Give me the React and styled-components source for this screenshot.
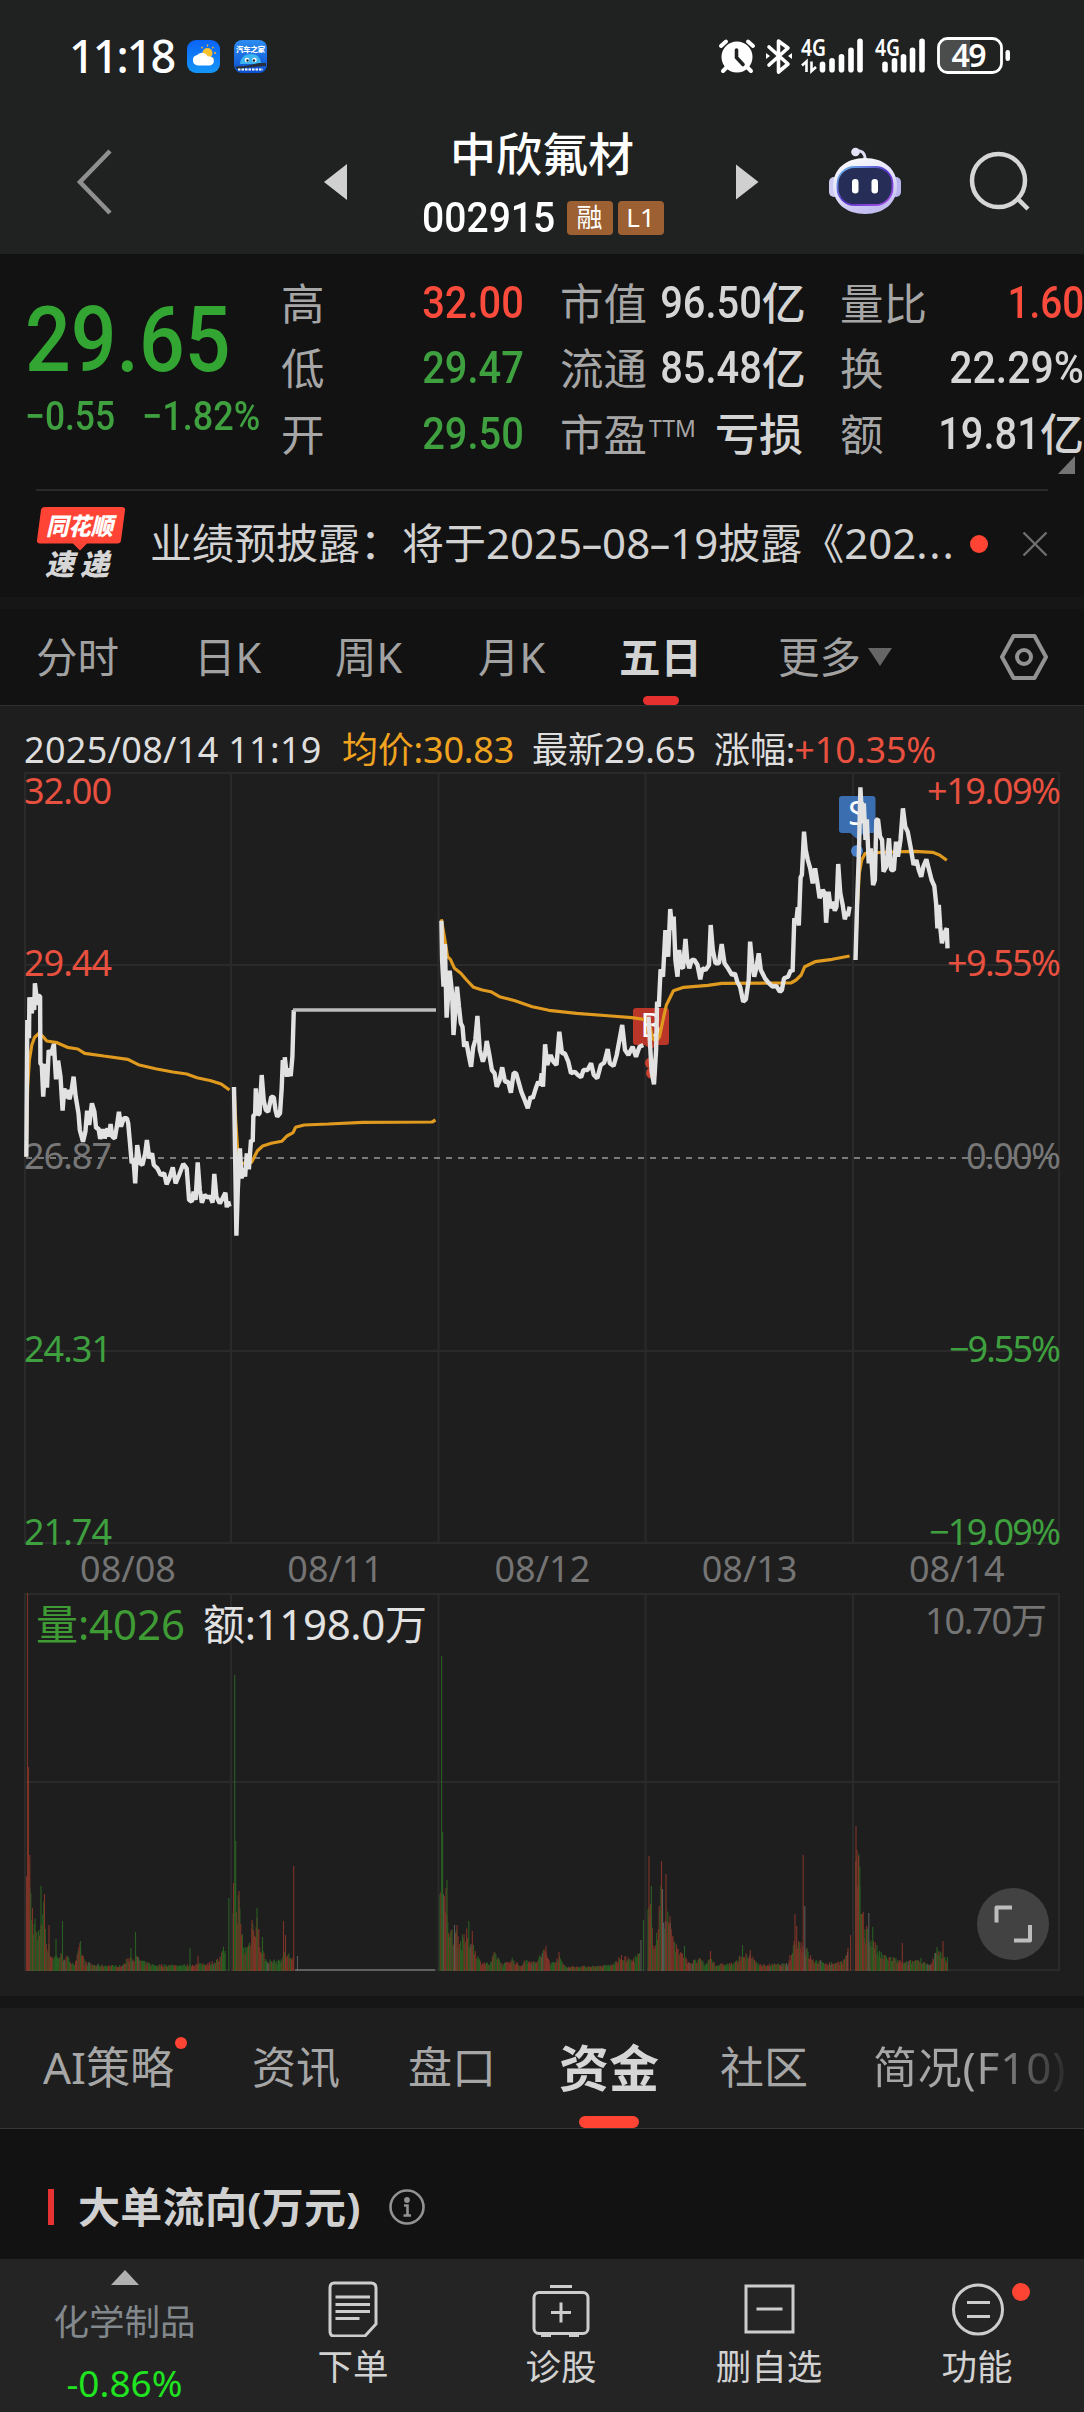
import React from "react";
import styled, { createGlobalStyle } from "styled-components";

const RED = "#e8503f";
const GREEN = "#3fa03f";

const GlobalStyle = createGlobalStyle`
  * {
    box-sizing: border-box;
  }
  body {
    margin: 0;
    background: #121212;
    color: #d4d4d4;
    font-family: "Noto Sans", "Noto Sans CJK SC", sans-serif;
  }
  svg {
    display: block;
    flex: none;
  }
`;

/* ---------- chart data ---------- */

// every point is in plot units, x0 moves a run to the right
const PX = 1568 / 542;
const toPath = ({ x0, pts }) =>
  pts
    .split(" ")
    .map((p) => {
      const [x, y] = p.split(",").map(Number);
      return `${(x0 + x / PX).toFixed(1)},${(760 + y / 3).toFixed(1)}`;
    })
    .join(" ");

const priceRuns = [
  { x0: 0, pts: "76,1190 79,780 84,835 85,712 92,760 96,712 99,750 101,670 106,712 108,735 112,708 116,708 117,910 121,915 125,1010 131,912 136,983 141,870 147,885 156,852 162,958 168,902 175,950 181,1052 186,985 190,1015 196,990 201,1018 207,990 213,950 219,1010 227,1060 231,1110 240,1145 247,1115 252,1052 258,1095 266,1030 273,1055 278,1105 285,1105 290,1137 297,1108 303,1135 311,1105 315,1130 320,1092 325,1130 332,1135 338,1100 344,1055 350,1100 358,1075 367,1075 371,1090 376,1150 381,1210 386,1195 391,1270 397,1155 405,1210 412,1215 420,1180 425,1140 432,1195 440,1180 445,1215 455,1225 465,1245 475,1240 482,1273 490,1255 500,1222 508,1270 518,1245 530,1212 540,1225 547,1320 555,1325 560,1295 566,1320 572,1207 578,1290 584,1328 592,1305 600,1312 608,1310 615,1328 620,1242 626,1310 636,1330 644,1315 652,1298 656,1342 660,1325 664,1340" },
  { x0: 0, pts: "677,981 684,1427 688,1290 694,1165 699,1255 705,1225 709,1250 714,1180 720,1228 726,1140 731,1145 733,1065 738,1065 740,985 746,1065 751,1060 757,945 763,1020 769,1050 776,1055 785,1010 792,1012 797,1050 802,1070 810,1060 815,985 818,900 822,945 824,892 830,950 834,925 841,948 846,890 850,750" },
  { x0: 0, pts: "1277,482 1279,600 1283,680 1287,552 1292,773 1297,700 1301,632 1308,700 1312,825 1317,760 1322,680 1328,740 1333,790 1338,800 1343,860 1349,845 1356,885 1363,920 1369,862 1375,840 1381,768 1388,870 1397,905 1403,885 1408,843 1415,880 1423,930 1431,940 1437,980 1445,962 1453,922 1461,965 1470,965 1478,998 1486,938 1493,940 1500,965 1508,995 1516,1015 1527,1045 1535,1010 1541,1015 1550,985 1557,965 1563,975 1567,940 1571,980 1577,853 1583,915 1593,885 1601,905 1610,915 1618,815 1626,880 1634,880 1644,905 1652,940 1663,935 1672,945 1681,952 1688,930 1700,930 1710,910 1718,945 1728,955 1738,915 1748,908 1758,867 1764,910 1775,918 1784,885 1800,795 1808,870 1818,885 1830,860 1840,890 1850,860 1861,855" },
  { x0: 542, pts: "308,770 312,840 317,935 324,973 330,870 333,725 338,740 343,628 350,650 357,510 365,590 371,447 377,510 381,470 386,600 392,650 397,570 402,620 408,625 415,537 420,600 426,625 433,600 441,600 450,615 458,658 464,625 473,630 483,615 488,495 494,570 502,610 512,610 520,552 528,610 538,625 550,645 558,640 565,665 573,680 582,725 590,718 598,660 602,545 608,610 614,650 620,625 627,580 633,630 645,655 655,668 667,680 678,678 688,695 694,690 700,655 712,650 720,630 725,635 730,475 735,490 740,442 743,497 748,352 752,345 758,215 763,270 769,300 776,325 783,370 790,325 797,370 803,415 812,390 818,400 822,488 829,395 835,445 841,425 847,452 852,440 857,312 863,400 870,435 876,478 882,455 885,468 890,440" },
  { x0: 542, pts: "907,600 912,420 917,270 921,82 926,180 931,130 936,240 940,178 945,310 951,265 958,375 963,360 967,180 972,178 978,230 984,240 988,335 996,320 1004,235 1010,330 1018,330 1024,245 1030,290 1037,240 1044,145 1051,200 1058,215 1066,260 1075,315 1083,300 1090,330 1097,350 1103,320 1112,298 1120,330 1127,360 1135,378 1140,430 1144,505 1148,435 1152,500 1157,550 1164,520 1171,505 1173,565" },
];

const averageRuns = [
  { x0: 0, pts: "76,1190 80,980 85,900 92,855 100,832 113,820 125,830 135,843 165,848 195,862 225,867 245,880 300,888 370,898 400,914 450,926 500,936 540,942 570,953 610,962 640,972 664,990" },
  { x0: 0, pts: "677,981 682,1080 690,1207 705,1210 728,1207 745,1172 760,1158 785,1150 815,1144 830,1128 848,1118 855,1102 880,1095 950,1092 1050,1087 1250,1086 1260,1080" },
  { x0: 0, pts: "1277,478 1287,540 1295,590 1303,598 1315,625 1333,640 1350,660 1370,682 1395,690 1420,695 1445,710 1490,722 1540,740 1588,751 1668,760 1768,768 1828,773 1863,778" },
  { x0: 542, pts: "308,778 320,835 330,845 340,830 350,780 360,735 380,692 410,682 480,676 520,670 720,669 735,660 750,645 760,620 790,605 840,598 890,588" },
  { x0: 542, pts: "907,598 912,450 918,340 925,300 935,280 1000,276 1080,274 1130,277 1150,285 1171,301" },
];

// [x, height] outline of the ordinary bars of each day
const volumeShapes = [
  [[26.5, 88], [29, 110], [32, 68], [35, 52], [38, 32], [41, 62], [44, 66], [47, 30], [52, 14], [60, 16], [66, 14], [75, 6], [80, 25], [85, 8], [95, 5], [122, 4], [130, 14], [136, 14], [144, 8], [155, 5], [188, 5], [200, 6], [213, 8], [220, 12], [226, 28]],
  [[233, 88], [237, 84], [240, 60], [244, 22], [249, 28], [253, 52], [257, 58], [260, 28], [266, 10], [279, 9], [286, 18], [292, 14], [294, 14]],
  [[440, 88], [444, 82], [447, 80], [450, 38], [455, 45], [461, 30], [467, 38], [473, 26], [480, 9], [490, 6], [495, 18], [503, 5], [512, 12], [520, 4], [528, 12], [535, 7], [545, 22], [551, 6], [558, 14], [566, 3], [600, 4], [612, 5], [622, 14], [632, 10], [640, 18]],
  [[648, 60], [651, 62], [654, 34], [657, 40], [661, 78], [665, 62], [671, 50], [676, 26], [683, 14], [690, 8], [701, 11], [705, 5], [711, 13], [716, 5], [735, 7], [742, 16], [752, 14], [760, 5], [788, 6], [795, 32], [801, 30], [806, 22], [813, 10], [830, 7], [843, 9], [848, 18]],
  [[855.5, 100], [858, 118], [861, 78], [865, 48], [870, 34], [876, 24], [882, 15], [893, 12], [904, 7], [920, 12], [930, 4], [936, 18], [941, 18], [947, 10]],
];

const R = "#a03a2b";
const G = "#2c7324";
const W = "#6e6e6e";
const volumeSpikes = [
  [27.5, 378, R], [28.5, 204, R], [29.8, 116, R], [41, 85, G], [44.5, 77, R], [49, 46, R], [56, 32, G], [62.5, 50, G], [80.5, 30, G],
  [131, 23, G], [135.5, 39, G], [190, 23, G], [198, 15, R], [228.8, 73, G],
  [233.5, 88, R], [234.7, 296, G], [235.7, 130, G], [239, 80, R], [252, 51, R], [257, 63, G], [262.5, 34, G], [283.5, 50, R], [285.5, 36, R], [293.7, 105, R], [297.5, 15, W],
  [441.6, 315, G], [442.6, 139, G], [447, 91, G], [454.5, 46, W], [457, 46, R], [468.8, 50, G], [472.3, 40, R], [546, 25, R], [559, 19, R], [643.5, 51, G], [641, 31, W],
  [649, 115, R], [651.4, 85, G], [661.5, 110, R], [662.5, 82, W], [666, 97, R], [670, 55, R], [684.5, 25, G], [710.5, 20, R], [742.5, 26, G], [750.3, 21, R], [795, 57, R], [796.7, 45, R], [803.2, 116, R], [804.8, 65, W], [848, 23, R], [850.6, 36, R],
  [856, 145, R], [857, 121, R], [858.5, 115, R], [859.8, 104, G], [868.8, 58, W], [872.7, 44, G], [902.3, 28, R], [937, 24, G], [943, 30, R], [947.5, 14, G],
];

function volumeBars() {
  let seed = 7;
  const rand = () => {
    seed = (seed * 16807) % 2147483647;
    return seed / 2147483647;
  };
  const bars = [];
  volumeShapes.forEach((shape) => {
    let i = 0;
    for (let x = shape[0][0]; x < shape[shape.length - 1][0]; x += 0.86) {
      while (x > shape[i + 1][0]) i++;
      const [x1, h1] = shape[i];
      const [x2, h2] = shape[i + 1];
      const h = h1 + ((h2 - h1) * (x - x1)) / (x2 - x1);
      const pick = rand();
      bars.push([x, h * (0.55 + rand() * 0.55) + 1.5, pick < 0.5 ? R : pick < 0.96 ? G : W]);
    }
  });
  return bars;
}

const bars = volumeBars().concat(volumeSpikes);

const dayLines = [231, 438.5, 645.5, 853];
const axis = [
  { y: 804, price: "32.00", pct: "+19.09%", width: 134, fill: RED },
  { y: 976, price: "29.44", pct: "+9.55%", width: 114, fill: RED },
  { y: 1169, price: "26.87", pct: "0.00%", width: 95, fill: "#777" },
  { y: 1362, price: "24.31", pct: "−9.55%", width: 112, fill: GREEN },
  { y: 1545, price: "21.74", pct: "−19.09%", width: 132, fill: GREEN },
];
const days = ["08/08", "08/11", "08/12", "08/13", "08/14"];

/* ---------- styles ---------- */

const Page = styled.div`
  width: 1084px;
  height: 2412px;
  display: flex;
  flex-direction: column;
  overflow: hidden;
  background: #121212;
`;

const TopArea = styled.header`
  height: 254px;
  background: #202221;
`;

const StatusBar = styled.div`
  height: 112px;
  padding: 0 69px 0 69px;
  display: flex;
  align-items: center;
`;

const Clock = styled.span`
  width: 118px;
  font-size: 45px;
  font-weight: 500;
  line-height: 60px;
  letter-spacing: -2px;
  color: #fff;
`;

const AppIcons = styled.div`
  display: flex;
  flex: 1;
  gap: 14px;
`;

const TitleBar = styled.div`
  height: 142px;
  padding: 0 52px 0 74px;
  display: flex;
  align-items: flex-start;
  svg {
    margin-top: 34px;
  }
`;

const TitleBox = styled.div`
  width: 390px;
  display: flex;
  flex-direction: column;
  align-items: center;
`;

const StockName = styled.div`
  margin-top: 13px;
  font-size: 46px;
  font-weight: 500;
  line-height: 56px;
  color: #fff;
`;

const CodeRow = styled.div`
  display: flex;
  align-items: center;
  gap: 5px;
  height: 46px;
  margin-top: 14px;
  padding-right: 8px;
`;

const Din = styled.span`
  display: inline-block;
  font-family: Roboto, "Noto Sans CJK SC", sans-serif;
  font-size: ${(p) => p.$size || 45}px;
  font-weight: 500;
  line-height: 1.2;
  color: ${(p) => p.$color || "#d6d6d6"};
  transform: scaleX(${(p) => p.$scale || 0.885});
  transform-origin: ${(p) => p.$origin || "right"} center;
`;

const Code = styled(Din)`
  margin-right: 6px;
`;

const Badge = styled.span`
  width: 46px;
  height: 34px;
  border-radius: 4px;
  background: #9c6032;
  color: #fff;
  font-size: 26px;
  line-height: 33px;
  text-align: center;
`;

const Quote = styled.section`
  position: relative;
  height: 235px;
  display: flex;
`;

const PriceBlock = styled.div`
  width: 281px;
  padding: 32px 0 0 25px;
  white-space: nowrap;
`;

const Changes = styled.div`
  display: flex;
  margin-top: -2px;
  gap: 15px;
`;

const Stats = styled.div`
  width: ${(p) => p.$width}px;
  margin-right: ${(p) => p.$gap || 0}px;
  padding-top: 16px;
`;

const StatRow = styled.div`
  height: 65.5px;
  display: flex;
  align-items: center;
  justify-content: space-between;
  white-space: nowrap;
`;

const StatLabel = styled.span`
  font-size: 43.5px;
  line-height: 60px;
  color: #a6a6a6;
  sup {
    margin-left: 2px;
    font-size: 23px;
    line-height: 0;
    vertical-align: 14px;
  }
`;

const StatValue = styled.span`
  display: flex;
  align-items: center;
  font-size: 44px;
  font-weight: 500;
  line-height: 60px;
`;

const Corner = styled.i`
  position: absolute;
  right: 9px;
  bottom: 15px;
  border-left: 17px solid transparent;
  border-bottom: 18px solid #747474;
`;

const News = styled.div`
  height: 108px;
  margin: 0 36px;
  border-top: 2px solid #2a2a2a;
  display: flex;
  align-items: center;
`;

const NewsText = styled.span`
  width: 820px;
  margin-left: 22px;
  margin-top: -3px;
  font-size: 42px;
  line-height: 60px;
  white-space: nowrap;
  color: #d2d2d2;
`;

const Hyphen = styled.span`
  display: inline-block;
  width: 20px;
  text-align: center;
  transform: scaleX(1.7);
`;

const Dots = styled.span`
  letter-spacing: 1.8px;
`;

const Dot = styled.i`
  width: ${(p) => p.$size}px;
  height: ${(p) => p.$size}px;
  border-radius: 50%;
  background: #ff4433;
`;

const CloseIcon = styled.svg`
  margin-left: auto;
`;

const Strip = styled.div`
  height: 12px;
  background: #161616;
`;

const PeriodTabs = styled.nav`
  height: 97px;
  padding: 0 36px;
  border-bottom: 1px solid #303030;
  display: grid;
  grid-template-columns: 158px 141px 143px 141px 159px 1fr 48px;
  align-items: center;
`;

const PeriodTab = styled.div`
  position: relative;
  display: flex;
  align-items: center;
  justify-self: start;
  height: 96px;
  font-size: 41.5px;
  line-height: 60px;
  font-weight: ${(p) => (p.$active ? 700 : 400)};
  color: ${(p) => (p.$active ? "#d2d2d2" : "#a2a2a2")};
`;

const Underline = styled.i`
  position: absolute;
  left: 50%;
  bottom: ${(p) => p.$bottom || 0}px;
  width: ${(p) => p.$width}px;
  height: ${(p) => p.$height}px;
  margin-left: ${(p) => p.$width / -2}px;
  border-radius: ${(p) => p.$height / 2}px;
  background: ${(p) => p.$color};
`;

const Caret = styled.i`
  margin-left: 7px;
  border: 12px solid transparent;
  border-top: 18px solid #666;
  border-bottom: 0;
`;

const ChartPanel = styled.section`
  height: 1290px;
  background: #1e1e1e;
`;

const ChartInfo = styled.div`
  height: 64px;
  padding: 15px 0 0 24px;
  display: flex;
  font-size: 36px;
  line-height: 58px;
  white-space: nowrap;
  color: #dedede;
`;

const InfoItem = styled.span`
  width: ${(p) => p.$width}px;
  letter-spacing: ${(p) => p.$spacing || 0}px;
  color: ${(p) => p.$color || "inherit"};
  em {
    margin-left: -1px;
    font-style: normal;
    color: ${RED};
  }
`;

const InfoTabs = styled.nav`
  height: 121px;
  padding-left: 43px;
  border-bottom: 1px solid #363636;
  background: #1e1e1e;
  display: grid;
  grid-template-columns: 209px 156px 151px 161px 153px 1fr;
  align-items: center;
`;

const InfoTab = styled.div`
  position: relative;
  justify-self: start;
  height: 120px;
  font-size: ${(p) => (p.$active ? 50 : 44)}px;
  font-weight: ${(p) => (p.$active ? 700 : 400)};
  line-height: ${(p) => (p.$active ? 121 : 119)}px;
  white-space: nowrap;
  color: ${(p) => (p.$active ? "#d6d6d6" : "#a6a6a6")};
`;

const FadingTab = styled(InfoTab)`
  letter-spacing: 0.8px;
  color: transparent;
  background: linear-gradient(90deg, #a6a6a6 55%, #2a2a2a 100%);
  background-clip: text;
  -webkit-background-clip: text;
`;

const TabDot = styled(Dot)`
  position: absolute;
  top: 29px;
  right: -13px;
`;

const Section = styled.section`
  height: 130px;
  padding: 27px 0 0 48px;
  display: flex;
  align-items: flex-start;
`;

const RedBar = styled.i`
  width: 6px;
  height: 36px;
  margin-top: 33px;
  background: #e63232;
`;

const SectionTitle = styled.h2`
  width: 311px;
  margin: 21px 0 0 24px;
  font-size: 42px;
  line-height: 60px;
  font-weight: 700;
  letter-spacing: 0.3px;
  white-space: nowrap;
  color: #d0d0d0;
`;

const InfoIcon = styled.svg`
  margin-top: 33px;
`;

const BottomBar = styled.footer`
  height: 153px;
  background: #242424;
  display: grid;
  grid-template-columns: 249px repeat(4, 208px);
`;

const Sector = styled.div`
  display: flex;
  flex-direction: column;
  align-items: center;
  padding-top: 11px;
  font-size: 35.5px;
  line-height: 50px;
  color: #82888c;
`;

const UpArrow = styled.i`
  border: 14px solid transparent;
  border-bottom: 15px solid #b0b0b0;
  border-top: 0;
`;

const SectorName = styled.span`
  margin-top: 11px;
`;

const SectorChange = styled.span`
  margin-top: 12px;
  font-size: 37px;
  color: #1fe41f;
`;

const Action = styled.div`
  position: relative;
  display: flex;
  flex-direction: column;
  align-items: center;
  gap: 4px;
  padding-top: 22px;
  font-size: 35.5px;
  line-height: 50px;
  color: #d2d2d2;
`;

const ActionDot = styled(Dot)`
  position: absolute;
  top: 24px;
  left: 139px;
`;

/* ---------- icons ---------- */

const WeatherIcon = () => (
  <svg width="33" height="33" viewBox="0 0 33 33">
    <defs>
      <linearGradient id="sky" x1="0" y1="0" x2="0" y2="1">
        <stop offset="0" stopColor="#0b63f6" />
        <stop offset="1" stopColor="#1496f8" />
      </linearGradient>
    </defs>
    <rect width="33" height="33" rx="9" fill="url(#sky)" />
    <circle cx="20.500" cy="13" r="5" fill="#fbc02d" />
    <path d="M20.500 4.500v2M26.500 7l-1.300 1.300M29 13h-2M14.500 7l1.300 1.300M26.500 19l-1.300-1.300" stroke="#f7b92b" strokeWidth="1.300" />
    <path d="M11 25.500a5.300 5.300 0 0 1-.8-10.500 6.300 6.300 0 0 1 10.500 1.400 4.700 4.700 0 1 1 .8 9.100z" fill="#fff" />
  </svg>
);

const CarIcon = () => (
  <svg width="33" height="33" viewBox="0 0 33 33">
    <defs>
      <linearGradient id="car" x1="0" y1="0" x2="0" y2="1">
        <stop offset="0" stopColor="#2c8cf0" />
        <stop offset="1" stopColor="#0b4fd0" />
      </linearGradient>
    </defs>
    <rect width="33" height="33" rx="8" fill="url(#car)" />
    <path d="M6 24c0-6 5-10 11-10s10 4 10 10z" fill="#3bb4ef" />
    <circle cx="13" cy="20" r="2.300" fill="#fff" />
    <circle cx="20.500" cy="20" r="2.300" fill="#fff" />
    <circle cx="13.500" cy="20.500" r="1.200" fill="#123" />
    <circle cx="20" cy="20.500" r="1.200" fill="#123" />
    <path d="M1 27l4-1 6 0 14-3h7v3l-22 2-5 3z" fill="#27303e" />
    <path d="M4 29.500h25" stroke="#fff" strokeWidth="2" strokeDasharray="2.500 1" />
    <text x="16.500" y="11.500" fontSize="7.300" fontWeight="900" fill="#fff" textAnchor="middle">汽车之家</text>
  </svg>
);

const Signal = ({ xs }) =>
  xs.map((x, i) => {
    const h = [11, 14.5, 18.5, 25, 34][i];
    return <rect key={x} x={x - 2.8} y={72.5 - h} width="5.600" height={h} rx="2.800" fill="#fff" />;
  });

const StatusIcons = () => (
  <svg width="297" height="50" viewBox="718 31 297 50">
    <g stroke="#fff" strokeWidth="4" strokeLinecap="round" fill="none">
      <path d="M721 46l5-4.500M753 46l-5-4.500M727 67l-4 4M747 67l4 4" />
      <circle cx="737" cy="57" r="13.500" fill="#fff" />
      <path d="M736.500 50v7.500l6.500 7" stroke="#202221" strokeWidth="3.600" />
    </g>
    <path d="M769 47l19 17-9.500 8V41l9.500 7-19 17" fill="none" stroke="#fff" strokeWidth="3.600" strokeLinejoin="round" strokeLinecap="round" />
    <path d="M766 53v6l4-3zM792 53v6l-4-3z" fill="#fff" />
    <text x="801" y="55.500" fontSize="23" fontWeight="600" fill="#fff" textLength="25" lengthAdjust="spacingAndGlyphs">4G</text>
    <path d="M802 65.500l4.500-4V72M811.500 61.500V71l4.500-4" fill="none" stroke="#fff" strokeWidth="2.600" />
    <Signal xs={[822.5, 832, 841.5, 851, 860]} />
    <text x="875" y="55.500" fontSize="23" fontWeight="600" fill="#fff" textLength="25" lengthAdjust="spacingAndGlyphs">4G</text>
    <Signal xs={[885, 894.5, 903.5, 912.5, 922]} />
    <path d="M970 40h-22a9 9 0 0 0-9 9v13a9 9 0 0 0 9 9h22z" fill="#4b4c4c" />
    <rect x="938.500" y="38.500" width="63" height="34" rx="9" fill="none" stroke="#fff" strokeWidth="2.800" />
    <rect x="1005.500" y="50" width="4.500" height="11" rx="2.200" fill="#fff" />
    <text x="969" y="66.500" fontSize="32" fontWeight="600" fill="#fff" textAnchor="middle" textLength="35">49</text>
  </svg>
);

const RobotIcon = () => (
  <svg width="74" height="70" viewBox="828 144 74 70">
    <defs>
      <linearGradient id="shell" x1="0" y1="0" x2=".4" y2="1">
        <stop offset="0" stopColor="#fff" />
        <stop offset=".6" stopColor="#e0def8" />
        <stop offset="1" stopColor="#c3bef0" />
      </linearGradient>
      <linearGradient id="visor" x1="0" y1="0" x2="1" y2="1">
        <stop offset="0" stopColor="#6fc4f0" />
        <stop offset=".5" stopColor="#5a35c8" />
        <stop offset="1" stopColor="#a855e8" />
      </linearGradient>
    </defs>
    <path d="M856 150c5-3 9 1 9 7" fill="none" stroke="#dcdcf2" strokeWidth="3" />
    <circle cx="855.500" cy="150" r="4.300" fill="#e4e4f8" />
    <rect x="829" y="175" width="10" height="20" rx="5" fill="#cfcaf2" />
    <rect x="891" y="175" width="10" height="20" rx="5" fill="#b9b4ee" />
    <path d="M865 156c19 0 32 11 32 28s-13 28-32 28-32-11-32-28 13-28 32-28z" fill="url(#shell)" />
    <rect x="837.500" y="165" width="55" height="38" rx="17" fill="#262e58" stroke="url(#visor)" strokeWidth="1.800" />
    <rect x="852" y="177" width="6.500" height="14.500" rx="3.200" fill="#fff" />
    <rect x="871.500" y="177" width="6.500" height="14.500" rx="3.200" fill="#fff" />
  </svg>
);

const NewsLogo = () => (
  <svg width="92" height="76" viewBox="36 506 92 76">
    <path d="M45 507h77q3.500 0 3 3.500l-4 30q-.5 3-3.500 3H87l-7 7-7-7H40q-3.500 0-3-3.500l4-30q.5-3 4-3z" fill="#ff4435" />
    <g fontFamily="Noto Sans CJK SC" fontWeight="900" fontStyle="italic">
      <text x="46" y="534.500" fontSize="24" fill="#fff" textLength="67" lengthAdjust="spacingAndGlyphs">同花顺</text>
      <text x="45" y="575" fontSize="29" fill="#d6d6d6" textLength="64">速递</text>
    </g>
  </svg>
);

const OrderIcon = () => (
  <svg width="56" height="56" viewBox="326 2281 56 56" fill="none" stroke="#cdcdcd" strokeWidth="3">
    <path d="M335 2283h37q5 0 5 5v36l-11 12h-31q-4 0-4-5v-43q0-5 4-5z" />
    <path d="M336.500 2297h34.500M336.500 2304.500h34.500M336.500 2311.500h34.500M336.500 2318.500h24" />
  </svg>
);

const DiagnoseIcon = () => (
  <svg width="58" height="56" viewBox="533 2281 58 56" fill="none" stroke="#cdcdcd" strokeWidth="3">
    <rect x="535" y="2292.500" width="54" height="41" rx="5" />
    <path d="M551 2286.500h22M562 2302.500v20M552 2312.500h20" />
    <path d="M542 2335.500h10M570 2335.500h10" strokeWidth="4" />
  </svg>
);

const RemoveIcon = () => (
  <svg width="58" height="56" viewBox="741 2281 58 56" fill="none" stroke="#cdcdcd" strokeWidth="3">
    <rect x="747" y="2286" width="47" height="46" />
    <path d="M757.500 2309h26" />
  </svg>
);

const MoreIcon = () => (
  <svg width="58" height="56" viewBox="949 2281 58 56" fill="none" stroke="#cdcdcd" strokeWidth="3">
    <circle cx="979" cy="2309.500" r="24.500" />
    <path d="M968 2302.500h23M968 2316.500h23" />
  </svg>
);

/* ---------- chart ---------- */

function Chart() {
  return (
    <svg width="1084" height="1226" viewBox="0 770 1084 1226" fontSize="36">
      <g stroke="#2a2a2a" strokeWidth="2" fill="none">
        <rect x="25" y="773" width="1034" height="770" />
        <rect x="25" y="1594" width="1034" height="376" />
        <path d="M25 965H1059M25 1351H1059M25 1782H1059" />
        {dayLines.map((x) => (
          <path key={x} d={`M${x} 773V1543M${x} 1594V1970`} />
        ))}
      </g>
      <path d="M26 1158H1059" stroke="#999" strokeWidth="1.600" strokeDasharray="6 6" />

      {axis.map((a) => (
        <g key={a.price} fill={a.fill}>
          <text x="24" y={a.y} textLength="88">{a.price}</text>
          <text x={1061 - a.width} y={a.y} textLength={a.width}>{a.pct}</text>
        </g>
      ))}
      {days.map((d, i) => (
        <text key={d} x={128 + i * 207.2} y="1582" fill="#747474" textAnchor="middle">{d}</text>
      ))}

      <g>
        <rect x="839" y="796" width="36.500" height="37" rx="3" fill="#3a6eb0" />
        <path d="M849 832l8 7 8-7z" fill="#3a6eb0" />
        <circle cx="857" cy="851" r="6" fill="#4a80c8" />
        <text x="857" y="825" fontSize="32" fill="#fff" textAnchor="middle">S</text>
        <rect x="633" y="1008" width="36" height="37" rx="3" fill="#b93629" />
        <path d="M643 1044l8 5 8-5z" fill="#b93629" />
        <circle cx="650.500" cy="1063" r="5.500" fill="#c8402f" />
        <circle cx="651.500" cy="1073" r="5.500" fill="#c8402f" />
        <text x="651" y="1037" fontSize="32" fill="#fff" textAnchor="middle">B</text>
      </g>

      <g fill="none" strokeLinejoin="bevel">
        {averageRuns.map((r, i) => (
          <polyline key={i} points={toPath(r)} stroke="#e09a1f" strokeWidth="3.200" />
        ))}
        {priceRuns.map((r, i) => (
          <polyline key={i} points={toPath(r)} stroke="#e2e2e2" strokeWidth="4.400" />
        ))}
        <path d="M293 1010H436" stroke="#bdbdbd" strokeWidth="3.600" />
      </g>

      <g opacity=".75">
        {bars.map(([x, h, fill], i) => (
          <rect key={i} x={x - 0.55} y={1971 - h} width="1.100" height={h} fill={fill} />
        ))}
        <path d="M295 1970H435" stroke="#888" strokeWidth="1.600" />
      </g>

      <g fontSize="42">
        <text x="36" y="1640" fill="#3f9c35" textLength="149">量:4026</text>
        <text x="203" y="1640" fill="#e2e2e2" textLength="224">额:1198.0万</text>
      </g>
      <text x="1047" y="1634" fill="#747474" textAnchor="end" textLength="122">10.70万</text>

      <circle cx="1013" cy="1924" r="36" fill="#424242" />
      <path d="M1012 1907.500h-15.500v15M1014 1940.500h16v-15.500" fill="none" stroke="#bdbdbd" strokeWidth="4" strokeLinejoin="round" />
    </svg>
  );
}

function Stat({ label, sup, value, unit, color, scale }) {
  return (
    <StatRow>
      <StatLabel>
        {label}
        {sup && <sup>{sup}</sup>}
      </StatLabel>
      <StatValue>
        {value && <Din $color={color} $scale={scale}>{value}</Din>}
        {unit}
      </StatValue>
    </StatRow>
  );
}

export default function App() {
  return (
    <Page>
      <GlobalStyle />
      <TopArea>
        <StatusBar>
          <Clock>11:18</Clock>
          <AppIcons>
            <WeatherIcon />
            <CarIcon />
          </AppIcons>
          <StatusIcons />
        </StatusBar>
        <TitleBar>
          <svg width="250" height="70" viewBox="74 146 250 70">
            <path d="M110 151L80 182l30 31" fill="none" stroke="#8f8f8f" strokeWidth="4.500" />
          </svg>
          <svg width="24" height="70" viewBox="324 146 24 70">
            <path d="M347 164v36l-23-18z" fill="#d0d0d0" />
          </svg>
          <TitleBox>
            <StockName>中欣氟材</StockName>
            <CodeRow>
              <Code $size={42} $color="#fff" $scale={0.93}>002915</Code>
              <Badge>融</Badge>
              <Badge>L1</Badge>
            </CodeRow>
          </TitleBox>
          <svg width="92" height="70" viewBox="738 146 92 70">
            <path d="M737.500 164v36l23-18z" fill="#d0d0d0" />
          </svg>
          <RobotIcon />
          <svg width="130" height="70" viewBox="902 146 130 70">
            <g fill="none" stroke="#d6d6d6" strokeWidth="4.500">
              <circle cx="998.500" cy="180.500" r="26.500" />
              <path d="M1017 198l11 11" />
            </g>
          </svg>
        </TitleBar>
      </TopArea>

      <Quote>
        <PriceBlock>
          <Din $size={91} $color="#32a532" $scale={0.885} $origin="left">29.65</Din>
          <Changes>
            <Din $size={40} $color={GREEN} $scale={0.885} $origin="left">−0.55</Din>
            <Din $size={40} $color={GREEN} $scale={0.9} $origin="left">−1.82%</Din>
          </Changes>
        </PriceBlock>
        <Stats $width={243} $gap={36}>
          <Stat label="高" value="32.00" color="#fa4b3c" />
          <Stat label="低" value="29.47" color={GREEN} />
          <Stat label="开" value="29.50" color={GREEN} />
        </Stats>
        <Stats $width={243} $gap={37}>
          <Stat label="市值" value="96.50" unit="亿" />
          <Stat label="流通" value="85.48" unit="亿" />
          <Stat label="市盈" sup="TTM" unit="亏损" />
        </Stats>
        <Stats $width={244}>
          <Stat label="量比" value="1.60" color="#fa4b3c" scale={0.86} />
          <Stat label="换" value="22.29%" scale={0.91} />
          <Stat label="额" value="19.81" unit="亿" />
        </Stats>
        <Corner />
      </Quote>

      <News>
        <NewsLogo />
        <NewsText>
          业绩预披露：将于2025<Hyphen>-</Hyphen>08<Hyphen>-</Hyphen>19披露《202<Dots>...</Dots>
        </NewsText>
        <Dot $size={18} />
        <CloseIcon width="26" height="26" viewBox="0 0 26 26">
          <path d="M1.500 1.500l23 23M24.500 1.500l-23 23" stroke="#6e6e6e" strokeWidth="2.400" />
        </CloseIcon>
      </News>
      <Strip />

      <PeriodTabs>
        <PeriodTab>分时</PeriodTab>
        <PeriodTab>日K</PeriodTab>
        <PeriodTab>周K</PeriodTab>
        <PeriodTab>月K</PeriodTab>
        <PeriodTab $active>
          五日
          <Underline $width={36} $height={9} $color="#e63030" />
        </PeriodTab>
        <PeriodTab>
          更多
          <Caret />
        </PeriodTab>
        <svg width="48" height="48" viewBox="0 0 48 48" fill="none" stroke="#929292" strokeWidth="4">
          <path d="M13.500 3h21L46 24 34.500 45h-21L2 24z" strokeLinejoin="round" />
          <circle cx="24" cy="24" r="7" />
        </svg>
      </PeriodTabs>

      <ChartPanel>
        <ChartInfo>
          <InfoItem $width={318} $spacing={0.3}>2025/08/14 11:19</InfoItem>
          <InfoItem $width={190} $spacing={-0.2} $color="#f0a31e">均价:30.83</InfoItem>
          <InfoItem $width={182}>最新29.65</InfoItem>
          <InfoItem $spacing={-0.1}>
            涨幅:<em>+10.35%</em>
          </InfoItem>
        </ChartInfo>
        <Chart />
      </ChartPanel>
      <Strip />

      <InfoTabs>
        <InfoTab>
          AI策略
          <TabDot $size={12} />
        </InfoTab>
        <InfoTab>资讯</InfoTab>
        <InfoTab>盘口</InfoTab>
        <InfoTab $active>
          资金
          <Underline $width={60} $height={12} $color="#ff4433" />
        </InfoTab>
        <InfoTab>社区</InfoTab>
        <FadingTab>简况(F10)</FadingTab>
      </InfoTabs>

      <Section>
        <RedBar />
        <SectionTitle>大单流向(万元)</SectionTitle>
        <InfoIcon width="36" height="36" viewBox="0 0 36 36" fill="none" stroke="#929292" strokeWidth="2.600">
          <circle cx="18" cy="18" r="16.500" />
          <circle cx="18" cy="11" r="1.600" fill="#929292" />
          <path d="M15 16.500h3.500V26M14.500 26.500h7.500" />
        </InfoIcon>
      </Section>

      <BottomBar>
        <Sector>
          <UpArrow />
          <SectorName>化学制品</SectorName>
          <SectorChange>-0.86%</SectorChange>
        </Sector>
        <Action>
          <OrderIcon />
          下单
        </Action>
        <Action>
          <DiagnoseIcon />
          诊股
        </Action>
        <Action>
          <RemoveIcon />
          删自选
        </Action>
        <Action>
          <MoreIcon />
          功能
          <ActionDot $size={18} />
        </Action>
      </BottomBar>
    </Page>
  );
}
